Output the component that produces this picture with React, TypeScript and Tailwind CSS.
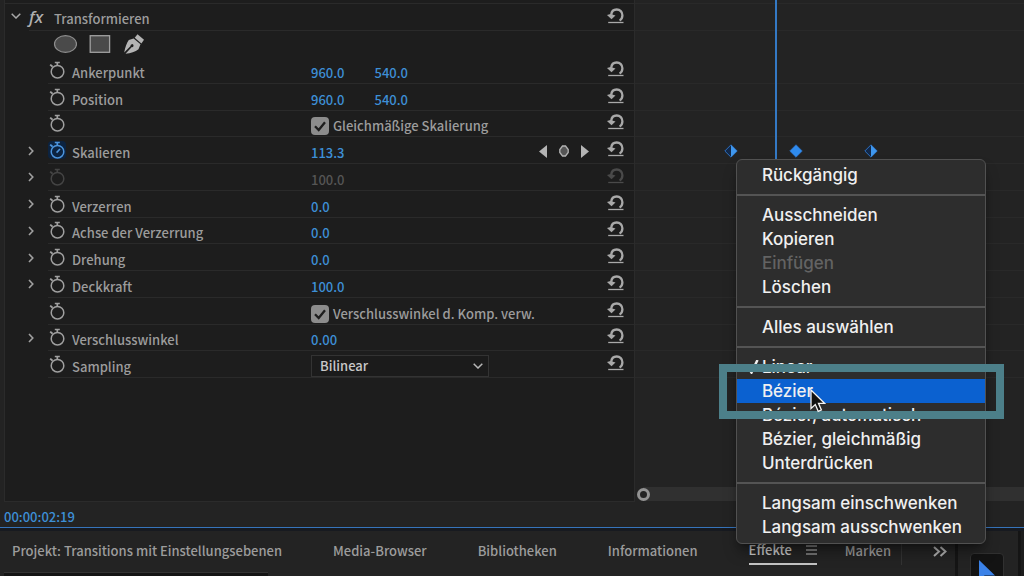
import { useState } from "react";

type Row = {
  label?: string;
  name: string;
  values?: string[];
  expandable?: boolean;
  check?: string;
  select?: string;
  state?: "active" | "disabled";
};

const rows: Row[] = [
  { name: "Ankerpunkt", label: "Ankerpunkt", values: ["960.0", "540.0"] },
  { name: "Position", label: "Position", values: ["960.0", "540.0"] },
  { name: "Gleichmäßig", check: "Gleichmäßige Skalierung" },
  { name: "Skalieren", label: "Skalieren", values: ["113.3"], expandable: true, state: "active" },
  { name: "Breite", values: ["100.0"], expandable: true, state: "disabled" },
  { name: "Verzerren", label: "Verzerren", values: ["0.0"], expandable: true },
  { name: "Achse", label: "Achse der Verzerrung", values: ["0.0"], expandable: true },
  { name: "Drehung", label: "Drehung", values: ["0.0"], expandable: true },
  { name: "Deckkraft", label: "Deckkraft", values: ["100.0"], expandable: true },
  { name: "Komposition", check: "Verschlusswinkel d. Komp. verw." },
  { name: "Verschlusswinkel", label: "Verschlusswinkel", values: ["0.00"], expandable: true },
  { name: "Sampling", label: "Sampling", select: "Bilinear" },
];

const menuGroups = [
  ["Rückgängig"],
  ["Ausschneiden", "Kopieren", "Einfügen", "Löschen"],
  ["Alles auswählen"],
  ["Linear", "Bézier", "Bézier, automatisch", "Bézier, gleichmäßig", "Unterdrücken"],
  ["Langsam einschwenken", "Langsam ausschwenken"],
];

function Chevron({ className }: { className: string }) {
  return (
    <svg viewBox="0 0 6 10" className={className} fill="none" stroke="currentColor" strokeWidth="1.6">
      <path d="M1 1l3.8 4L1 9" />
    </svg>
  );
}

function ChevronDown({ className }: { className: string }) {
  return (
    <svg viewBox="0 0 10 6" className={className} fill="none" stroke="currentColor" strokeWidth="1.5">
      <path d="M.7.8L5 5 9.300.8" />
    </svg>
  );
}

function Stopwatch({ active }: { active?: boolean }) {
  return (
    <svg viewBox="0 0 16 18" className="h-[18px] w-4" fill="none" stroke="currentColor" strokeWidth="1.5">
      <circle cx="8.500" cy="10.700" r="6.300" />
      <path d="M5.800 1.500h5M8.300 1.500v2.800" strokeWidth="1.700" />
      <path d="M1.200 3.600l2.400 2.200" strokeWidth="1.900" />
      {active && <path d="M7.600 11.600l3.400-3.600" strokeWidth="1.600" />}
    </svg>
  );
}

function ResetButton({ name, disabled }: { name: string; disabled?: boolean }) {
  return (
    <button
      type="button"
      aria-label={`${name} zurücksetzen`}
      disabled={disabled}
      className="mb-0.5 shrink-0 text-[#a9a9a9] disabled:text-[#4a4a4a]"
    >
      <svg viewBox="0 0 17 16" className="h-4 w-[17px]" fill="none" stroke="currentColor">
        <path d="M12.600 12.600C14.500 11.400 15.400 9.600 15.400 7.300C15.400 3.900 13 1.500 9.700 1.500C6.600 1.500 4.500 3.500 4.200 6.800" strokeWidth="2.300" />
        <path d="M0 7L3.500 5.900 8.500 7.400 4.500 11.200z" fill="currentColor" stroke="none" />
        <path d="M1.200 14.500h15.300" strokeWidth="1.300" />
      </svg>
    </button>
  );
}

function KeyframeNav() {
  return (
    <div className="mr-[18px] flex items-center gap-3 pt-0.5 text-[#b4b4b4]">
      <button type="button" aria-label="Vorheriger Keyframe">
        <svg viewBox="0 0 8 13" className="h-[13px] w-2" fill="currentColor">
          <path d="M8 0v13L0 6.500z" />
        </svg>
      </button>
      <button type="button" aria-label="Keyframe hinzufügen">
        <svg viewBox="0 0 10 12" className="h-3 w-2.5" fill="#555" stroke="currentColor" strokeWidth="1.300">
          <path d="M3.500 1h3L9.200 4.500v3L6.500 11h-3L.8 7.500v-3z" />
        </svg>
      </button>
      <button type="button" aria-label="Nächster Keyframe">
        <svg viewBox="0 0 8 13" className="h-[13px] w-2" fill="currentColor">
          <path d="M0 0v13l8-6.500z" />
        </svg>
      </button>
    </div>
  );
}

function PropertyRow({ row }: { row: Row }) {
  const [checked, setChecked] = useState(true);
  const disabled = row.state === "disabled";
  const active = row.state === "active";

  return (
    <div className="flex">
      <div className="flex w-[43px] items-center justify-end pr-[14px] text-[#a0a0a0]">
        {row.expandable && (
          <button type="button" aria-label={`${row.name} aufklappen`}>
            <Chevron className="h-2.5 w-1.5" />
          </button>
        )}
      </div>
      <div className="flex min-w-0 flex-1 items-center border-b border-[#2a2a2a] pr-2.5">
        <button
          type="button"
          aria-label={`Animation ${row.name}`}
          className={
            active
              ? "rounded-sm bg-[#0c2340] px-px text-[#4c94dc]"
              : disabled
                ? "px-px text-[#444]"
                : "px-px text-[#a0a0a0]"
          }
        >
          <Stopwatch active={active} />
        </button>
        <span className="w-[245px] shrink-0 pt-1.5 pl-1.5">{row.label}</span>
        <div className="flex min-w-0 flex-1 items-center">
          {row.values && (
            <div className="flex gap-[30px] pt-1.5">
              {row.values.map((v, i) => (
                <button key={i} type="button" className={disabled ? "text-[#555]" : "text-[#3d8fd6]"}>
                  {v}
                </button>
              ))}
            </div>
          )}
          {row.check && (
            <label className="flex items-center gap-1 pt-1.5 whitespace-nowrap">
              <span className="grid">
                <input
                  type="checkbox"
                  checked={checked}
                  onChange={(e) => setChecked(e.target.checked)}
                  className="col-start-1 row-start-1 h-[18px] w-[18px] appearance-none rounded-sm bg-[#8c8c8c]"
                />
                {checked && (
                  <svg
                    viewBox="0 0 18 18"
                    className="pointer-events-none col-start-1 row-start-1 h-[18px] w-[18px]"
                    fill="none"
                    stroke="#1d1d1d"
                    strokeWidth="2.300"
                  >
                    <path d="M4 9.200l3.700 3.800L14 5.200" />
                  </svg>
                )}
              </span>
              {row.check}
            </label>
          )}
          {row.select && (
            <div className="grid items-center pt-1">
              <select
                aria-label={row.name}
                defaultValue={row.select}
                className="col-start-1 row-start-1 h-[22px] w-[178px] appearance-none border border-[#333] bg-[#1b1b1b] pl-2 text-[#c8c8c8]"
              >
                <option>Bilinear</option>
                <option>Bikubisch</option>
              </select>
              <ChevronDown className="pointer-events-none col-start-1 row-start-1 mr-1.5 h-1.5 w-2.5 justify-self-end text-[#b8b8b8]" />
            </div>
          )}
        </div>
        {active && <KeyframeNav />}
        <ResetButton name={row.name} disabled={disabled} />
      </div>
    </div>
  );
}

function EffectControls() {
  return (
    <section className="w-[62%] shrink-0 pl-1">
      <div className="border-r border-b border-l border-[#2b2b2b] bg-[#1d1d1d] pb-[123px]">
        <div className="h-1 border-b border-[#2a2a2a]" />
        <div className="flex h-[27px]">
          <div className="flex w-6 items-center pb-1 pl-1.5 text-[#a8a8a8]">
            <button type="button" aria-label="Transformieren einklappen">
              <ChevronDown className="h-1.5 w-2.5" />
            </button>
          </div>
          <div className="flex flex-1 items-center border-b border-[#2a2a2a] pr-2.5">
            <span className="w-[25px] font-['Noto_Sans'] text-[17px] leading-5 text-[#b0b0b0] italic">fx</span>
            <h2 className="flex-1 pt-1">Transformieren</h2>
            <ResetButton name="Transformieren" />
          </div>
        </div>
        <div className="flex h-[26px] items-center gap-3 pl-12">
          <button type="button" aria-label="Ellipsenmaske">
            <svg viewBox="0 0 24 18" className="h-[18px] w-6" fill="#4a4a4a" stroke="#8e8e8e" strokeWidth="1.200">
              <ellipse cx="12.500" cy="9" rx="11" ry="8.300" />
            </svg>
          </button>
          <button type="button" aria-label="Rechteckmaske">
            <svg viewBox="0 0 22 18" className="h-[18px] w-[22px]" fill="#4a4a4a" stroke="#a0a0a0" strokeWidth="1.300">
              <rect x="1.200" y=".7" width="19.400" height="16.600" />
            </svg>
          </button>
          <button type="button" aria-label="Zeichenstift">
            <svg viewBox="0 0 22 20" className="h-5 w-[22px]" fill="#b4b4b4">
              <path d="M14.500.2l6.500 5.600-2.600 3.600-6.700-5.700z" />
              <path d="M10.600 4.600l6.900 5.700-2 4.900c-3.200 2.700-7.700 4.100-13 4.600l6.300-6.700a1.500 1.500 0 1 0-1.200-1L1.200 18.600C2.200 13 3.600 9.200 5.800 6z" />
            </svg>
          </button>
        </div>
        <div className="grid h-[321px] auto-rows-fr">
          {rows.map((row) => (
            <PropertyRow key={row.name} row={row} />
          ))}
        </div>
      </div>
    </section>
  );
}

function Keyframe({ full, className }: { full?: boolean; className: string }) {
  return (
    <svg viewBox="0 0 14 14" className={className}>
      <path d="M7 .8L13.200 7 7 13.200.8 7z" fill={full ? "#2f8bee" : "#12294a"} stroke="#2d6fbe" />
      {!full && <path d="M7 1l6 6-6 6z" fill="#3f97ee" />}
    </svg>
  );
}

function ContextMenu() {
  return (
    <div className="absolute top-[159px] left-[101px] z-10 w-[250px] text-[17px] leading-6 text-[#f0f0f0]">
      <div
        role="menu"
        className="rounded-md border border-[#515151] bg-[#2d2d2d] pt-[3px] pb-1 font-['Inter',sans-serif] shadow-lg shadow-black/40"
      >
        {menuGroups.map((group, g) => (
          <div key={g} role="group">
            {g > 0 && <div role="separator" className="my-[7px] h-0.5 bg-[#545454]" />}
            {group.map((item) => (
              <button
                key={item}
                type="button"
                role="menuitem"
                disabled={item === "Einfügen"}
                className={
                  item === "Bézier"
                    ? "flex h-6 w-full items-center bg-[#0b61d0] whitespace-nowrap"
                    : "flex h-6 w-full items-center whitespace-nowrap disabled:text-[#636363]"
                }
              >
                <span className="w-[25px] shrink-0 pl-2.5">
                  {item === "Linear" && (
                    <svg viewBox="0 0 12 14" className="h-3.5 w-3" fill="none" stroke="currentColor" strokeWidth="2.5">
                      <path d="M1.500 8l3 4.500L10.500 0" />
                    </svg>
                  )}
                </span>
                {item}
              </button>
            ))}
          </div>
        ))}
      </div>
      {/* frame that marks the chosen interpolation */}
      <div className="pointer-events-none absolute top-[205px] -left-[17px] h-[55px] w-[285px] border-8 border-[#4c7f89]" />
      <svg viewBox="0 0 16 24" className="pointer-events-none absolute top-[230px] left-[74px] h-6 w-4">
        <path
          d="M1 1v18.500l4.300-4 2.900 6.800 3.200-1.400-2.900-6.600h6z"
          fill="#111"
          stroke="#f2f2f2"
          strokeWidth="1.300"
        />
      </svg>
    </div>
  );
}

function Timeline() {
  return (
    <section className="relative flex min-w-0 flex-1 flex-col justify-between">
      <div>
        <div className="h-1 border-b border-[#292929]" />
        <div className="h-[27px] border-b border-[#292929]" />
        <div className="h-[26px]" />
        <div className="grid h-[321px] auto-rows-fr">
          {rows.map((row) => (
            <div key={row.name} className="border-b border-[#292929]" />
          ))}
        </div>
      </div>
      <div className="mb-px ml-2 flex h-3.5 items-center bg-[#303030]">
        <button
          type="button"
          aria-label="Zoom"
          className="-ml-1.5 h-[13px] w-[13px] rounded-full border-3 border-[#939393] bg-[#232323]"
        />
      </div>
      <div className="absolute top-0 left-[140px] h-[159px] w-0.5 bg-[#3479c4]" />
      <Keyframe className="absolute top-[144px] left-[89px] h-3.5 w-3.5" />
      <Keyframe full className="absolute top-[144px] left-[154px] h-3.5 w-3.5" />
      <Keyframe className="absolute top-[144px] left-[229px] h-3.5 w-3.5" />
      <ContextMenu />
    </section>
  );
}

function BottomPanels() {
  return (
    <div className="flex flex-1 bg-[#151515]">
      <section className="flex min-w-0 flex-1 flex-col bg-[#232323]">
        <nav className="flex h-[41px] shrink-0 items-start pt-1.5 pl-3 whitespace-nowrap">
          <div className="flex gap-[51px]">
            <button type="button" className="h-7">Projekt: Transitions mit Einstellungsebenen</button>
            <button type="button" className="h-7">Media-Browser</button>
            <button type="button" className="h-7">Bibliotheken</button>
            <button type="button" className="h-7">Informationen</button>
            <button type="button" className="flex h-7 items-center gap-3.5 border-b-2 border-[#c4c4c4] text-[#c8c8c8]">
              Effekte
              <svg viewBox="0 0 11 10" className="h-2.5 w-[11px]" stroke="currentColor" strokeWidth="1.200">
                <path d="M0 1h11M0 5h11M0 9h11" />
              </svg>
            </button>
          </div>
          <button type="button" className="ml-7 h-7 border-r border-[#333] pr-2.5">Marken</button>
          <button type="button" aria-label="Weitere Bedienfelder" className="mr-2 ml-auto flex h-7 items-center text-[#b0b0b0]">
            <svg viewBox="0 0 14 11" className="h-[11px] w-3.5" fill="none" stroke="currentColor" strokeWidth="2">
              <path d="M1 1l5 4.500-5 4.500M7.500 1l5 4.500-5 4.500" />
            </svg>
          </button>
        </nav>
        <div className="ml-1 w-[264px] flex-1 border-t border-[#333] bg-[#141414]" />
      </section>
      <aside className="ml-[3px] w-[60px] overflow-hidden bg-[#232323] pt-[22px] pl-3">
        <button
          type="button"
          aria-label="Auswahl"
          className="flex h-[34px] w-[34px] justify-center rounded-sm border border-[#303030] bg-[#131313] pt-1.5"
        >
          <svg viewBox="0 0 16 22" className="h-[22px] w-4" fill="#3b82e8">
            <path d="M0 0v21l5.500-5.500H16z" />
          </svg>
        </button>
      </aside>
      <div className="ml-[3px] w-[3px] bg-[#1c1c1c]" />
    </div>
  );
}

export default function App() {
  return (
    <main className="flex h-screen flex-col overflow-hidden bg-[#232323] font-['Noto_Sans_CJK_SC',sans-serif] text-[13px] leading-[18px] font-medium text-[#9c9c9c]">
      <div className="flex">
        <EffectControls />
        <Timeline />
      </div>
      <div className="h-[26px] shrink-0 border-b border-[#3674bb] pt-1.5 pl-1 text-[#3d8fd6]">00:00:02:19</div>
      <div className="h-[3px] shrink-0 bg-[#171a20]" />
      <BottomPanels />
    </main>
  );
}
